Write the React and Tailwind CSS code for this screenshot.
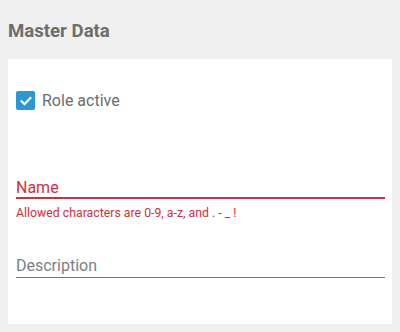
import React from 'react';

export default function App() {
  return (
    <div
      className="w-[400px] h-[332px] bg-[#f0f0f0] px-2 overflow-hidden"
      style={{ fontFamily: 'Roboto, "Liberation Sans", sans-serif' }}
    >
      <h2 className="pt-[20px] h-[59px] text-[18.6px] font-bold leading-[22px] text-[#6b6e6a]">
        Master Data
      </h2>
      <div className="bg-white h-[265px] pl-2 pr-[7px] pt-[32px]">
        <label className="flex items-center gap-[7px] h-[19px]">
          <span className="w-[19px] h-[19px] rounded-[2px] bg-[#2b98d3] flex items-center justify-center">
            <svg width="14" height="14" viewBox="0 0 24 24" fill="none" stroke="white" strokeWidth="3.8" strokeLinecap="square">
              <path d="M4.5 12.5l5 5L19.5 7" />
            </svg>
          </span>
          <span className="text-[16px] text-[#6c6c6c]">Role active</span>
        </label>

        <div className="mt-[68px]">
          <div className="h-[21px] text-[16px] leading-[19px] text-[#d0303a] border-b-2 border-[#d0303a]">
            Name
          </div>
          <div className="mt-[7px] text-[12.3px] leading-[14px] text-[#d0303a]">
            Allowed characters are 0-9, a-z, and . - _ !
          </div>
        </div>

        <div className="mt-[36px] h-[22px] text-[16px] leading-[19px] text-[#7a7f86] border-b border-[#777]">
          Description
        </div>
      </div>
    </div>
  );
}
